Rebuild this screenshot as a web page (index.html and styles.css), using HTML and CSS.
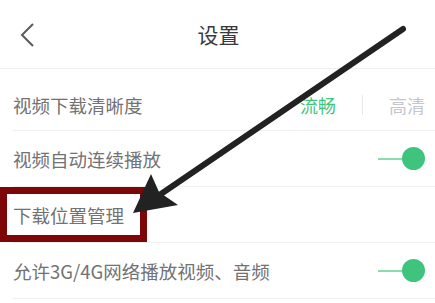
FILE: index.html
```html
<!DOCTYPE html>
<html lang="zh-CN">
<head>
    <meta charset="UTF-8">
    <meta name="viewport" content="width=device-width, initial-scale=1.0">
    <title>设置</title>
    <link rel="stylesheet" href="styles.css">
</head>
<body>

<header class="topbar">
    <svg class="back" width="16" height="26" viewBox="0 0 16 26">
        <polyline points="13,2 2,13 13,24" fill="none" stroke="#5a5a5a" stroke-width="2"/>
    </svg>
    <h1>设置</h1>
    <span></span>
</header>

<ul class="settings">
    <li class="row first">
        <span class="label">视频下载清晰度</span>
        <span class="quality">
            <span class="opt active">流畅</span>
            <span class="sep"></span>
            <span class="opt">高清</span>
        </span>
    </li>
    <li class="row">
        <span class="label">视频自动连续播放</span>
        <span class="toggle"><i></i></span>
    </li>
    <li class="row">
        <span class="label">下载位置管理</span>
    </li>
    <li class="row">
        <span class="label">允许3G/4G网络播放视频、音频</span>
        <span class="toggle"><i></i></span>
    </li>
</ul>

<!-- annotation overlay -->
<div class="mark"></div>
<svg class="arrow" width="435" height="303" viewBox="0 0 435 303">
    <line x1="158" y1="196" x2="403" y2="29" stroke="#222" stroke-width="6" stroke-linecap="round"/>
    <polygon points="133,213 151,174 159,192 178,205" fill="#222"/>
</svg>

</body>
</html>
```

FILE: styles.css
```css
body {
    margin: 0;
    background: #fff;
    font-family: "Noto Sans CJK SC", "Noto Sans", sans-serif;
    position: relative;
    width: 435px;
    height: 303px;
    overflow: hidden;
}

.topbar {
    height: 68px;
    display: grid;
    grid-template-columns: 60px 1fr 60px;
    align-items: center;
    border-bottom: 1px solid #f0f0f0;
}

.back {
    margin-left: 20px;
    margin-top: 2px;
}

.topbar h1 {
    margin: 0;
    text-align: center;
    font-size: 21px;
    font-weight: normal;
    color: #3a3a3a;
    padding-left: 2px;
}

.settings {
    list-style: none;
    margin: 0 0 0 13px;
    padding: 0;
}

.row {
    height: 55px;
    display: flex;
    align-items: center;
    justify-content: space-between;
    padding-right: 10px;
    border-bottom: 1px solid #efefef;
}

.row.first {
    height: 51px;
    padding-top: 10px;
}

.label {
    font-size: 18.5px;
    color: #727272;
}

.quality {
    display: flex;
    align-items: center;
    font-size: 18px;
}

.opt {
    color: #c4c6cf;
}

.opt.active {
    color: #3fc47d;
}

.sep {
    width: 1px;
    height: 20px;
    background: #e8e8ec;
    margin: 0 26px;
}

.toggle {
    display: flex;
    align-items: center;
}

.toggle::before {
    content: "";
    width: 26px;
    height: 2px;
    background: #8ddcb0;
}

.toggle i {
    width: 23px;
    height: 23px;
    border-radius: 50%;
    background: #3fc47d;
    margin-left: -2px;
}

.mark {
    position: absolute;
    left: 0;
    top: 187px;
    width: 133px;
    height: 41px;
    border: 7px solid #7d0606;
}

.arrow {
    position: absolute;
    left: 0;
    top: 0;
}
```
